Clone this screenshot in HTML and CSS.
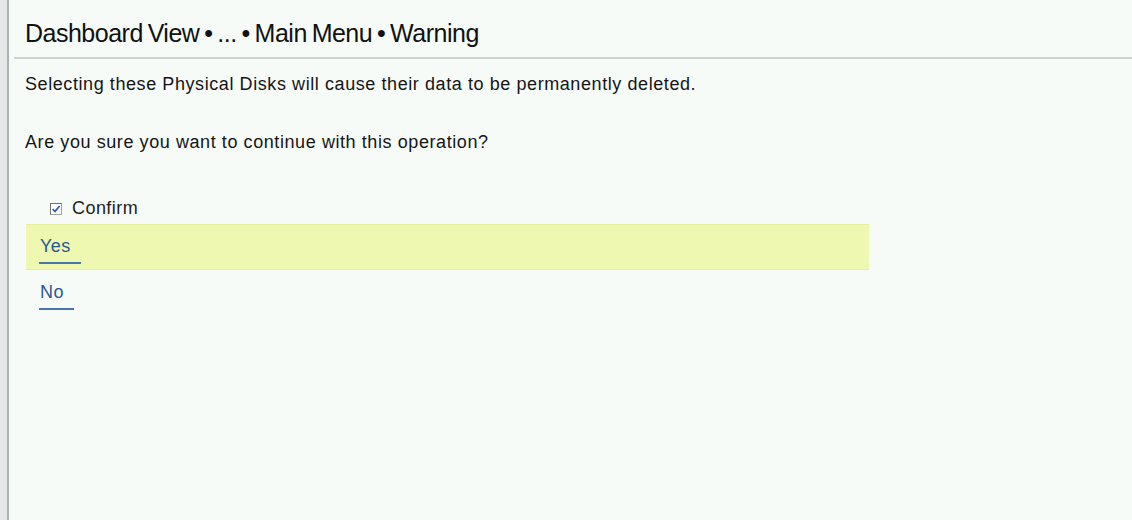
FILE: index.html
```html
<!DOCTYPE html>
<html>
<head>
<meta charset="utf-8">
<link rel="stylesheet" href="styles.css">
</head>
<body>
<div class="frame">
  <div class="rail"></div>
  <div class="panel">
    <header class="title-bar">
      <h1 class="title">Dashboard View • ... • Main Menu • Warning</h1>
    </header>
    <main class="content">
      <p class="msg">Selecting these Physical Disks will cause their data to be permanently deleted.</p>
      <p class="msg question">Are you sure you want to continue with this operation?</p>
      <label class="confirm">
        <span class="check">
          <svg width="10" height="10" viewBox="0 0 10 10"><path d="M1.6 5 L4 7.5 L8.6 2" fill="none" stroke="#2f55c8" stroke-width="1.8"/></svg>
        </span>
        <span class="confirm-text">Confirm</span>
      </label>
      <ul class="choices">
        <li class="choice active"><a class="link">Yes</a></li>
        <li class="choice"><a class="link">No</a></li>
      </ul>
    </main>
  </div>
</div>
</body>
</html>
```

FILE: styles.css
```css
html, body {
  margin: 0;
  padding: 0;
  height: 100%;
}
body {
  font-family: "Liberation Sans", Arial, sans-serif;
  color: #111;
  background: #f6fbf8;
}
.frame {
  display: flex;
  height: 520px;
  overflow: hidden;
}
.rail {
  width: 7px;
  flex: none;
  background: #e6e8e8;
  border-right: 2px solid #a9b1b1;
}
.panel {
  flex: 1;
  background: #f6fbf8;
  padding-left: 5px;
}
.title-bar {
  height: 59px;
  border-bottom: 2px solid #cfd2d1;
  box-sizing: border-box;
  padding-top: 19px;
  padding-left: 11px;
}
.title {
  margin: 0;
  font-weight: normal;
  font-size: 25px;
  line-height: 28px;
  letter-spacing: -0.5px;
  word-spacing: -1.6px;
  color: #111;
}
.content {
  padding-left: 11px;
}
.msg {
  margin: 0;
  font-size: 18px;
  line-height: 22px;
  letter-spacing: 0.58px;
  color: #151515;
}
.msg:first-child {
  padding-top: 14px;
}
.question {
  margin-top: 36px;
}
.confirm {
  display: flex;
  align-items: center;
  gap: 10px;
  margin-top: 44px;
  margin-left: 25px;
  height: 22px;
}
.check {
  width: 10px;
  height: 10px;
  border: 1px solid #a0a0a0;
  border-top-color: #707070;
  border-left-color: #707070;
  background: #fdfdfd;
  display: flex;
  align-items: center;
  justify-content: center;
  margin-top: 2px;
}
.confirm-text {
  font-size: 18px;
  letter-spacing: 0.45px;
  color: #222;
}
.choices {
  list-style: none;
  margin: 5px 0 0 1px;
  padding: 0;
  width: 843px;
}
.choice {
  height: 46px;
  box-sizing: border-box;
  padding-left: 13px;
  padding-top: 11px;
}
.choice.active {
  background: #eff8b0;
  border-top: 1px solid #e4ef9f;
  border-bottom: 1px solid #e4ef9f;
  padding-top: 10px;
}
.link {
  display: inline-block;
  font-size: 18px;
  line-height: 22px;
  letter-spacing: 0.4px;
  color: #2a5797;
  border-bottom: 2px solid #4a76b0;
  padding: 0 10px 5px 1px;
}
```
